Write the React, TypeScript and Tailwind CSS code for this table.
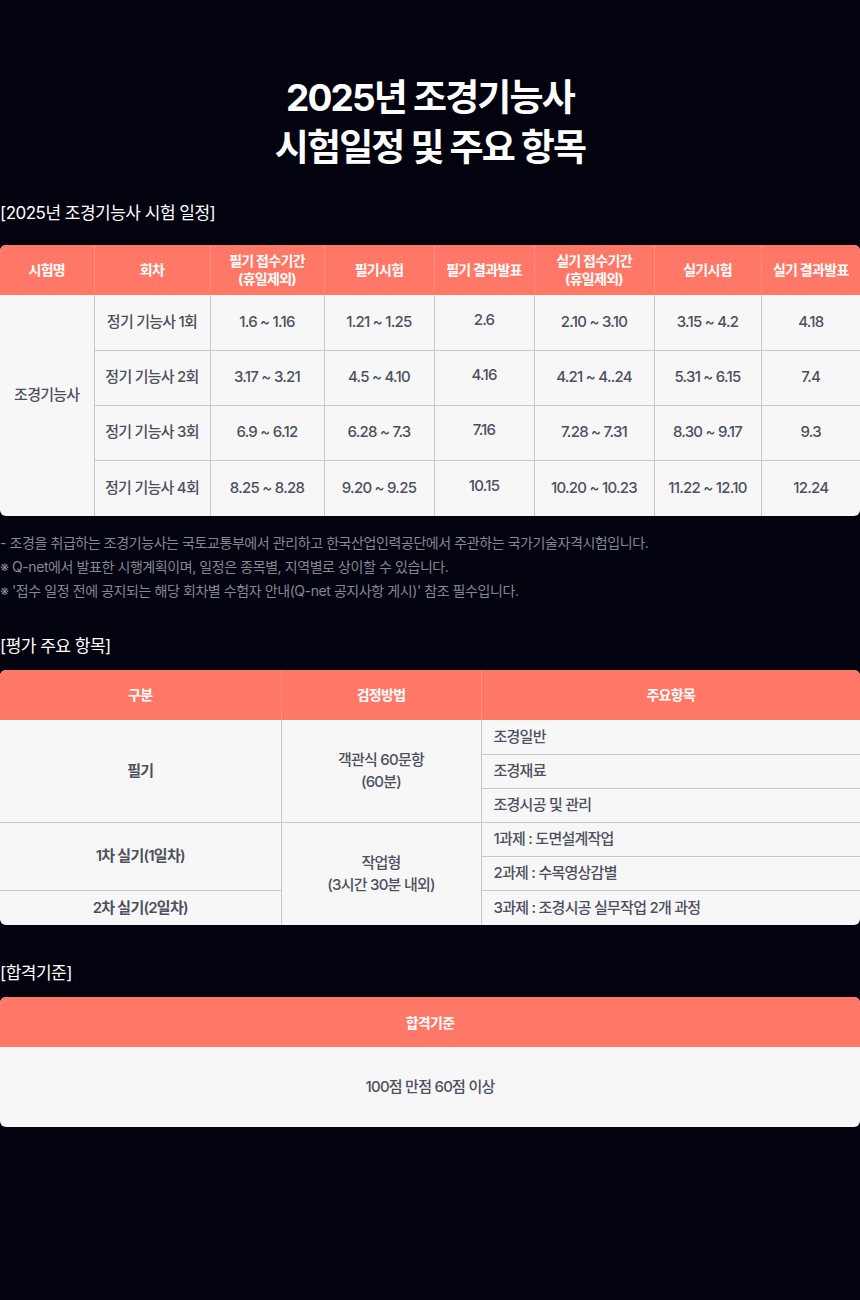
const font = { fontFamily: '"Inter", "Noto Sans CJK KR", sans-serif' };

const schedule = [
  ["정기 기능사 1회", "1.6 ~ 1.16", "1.21 ~ 1.25", "2.6", "2.10 ~ 3.10", "3.15 ~ 4.2", "4.18"],
  ["정기 기능사 2회", "3.17 ~ 3.21", "4.5 ~ 4.10", "4.16", "4.21 ~ 4..24", "5.31 ~ 6.15", "7.4"],
  ["정기 기능사 3회", "6.9 ~ 6.12", "6.28 ~ 7.3", "7.16", "7.28 ~ 7.31", "8.30 ~ 9.17", "9.3"],
  ["정기 기능사 4회", "8.25 ~ 8.28", "9.20 ~ 9.25", "10.15", "10.20 ~ 10.23", "11.22 ~ 12.10", "12.24"],
];

const notes = [
  "- 조경을 취급하는 조경기능사는 국토교통부에서 관리하고 한국산업인력공단에서 주관하는 국가기술자격시험입니다.",
  "※ Q-net에서 발표한 시행계획이며, 일정은 종목별, 지역별로 상이할 수 있습니다.",
  "※ '접수 일정 전에 공지되는 해당 회차별 수험자 안내(Q-net 공지사항 게시)' 참조 필수입니다.",
];

function SectionLabel({ children }: { children: React.ReactNode }) {
  return <h3 className="text-[17px] leading-[24px] text-white tracking-[-0.03em]">{children}</h3>;
}

const th = "bg-[#ff7867] text-white text-[14px] font-bold leading-[18px] tracking-[-0.05em] border-r border-[#ff8e80] last:border-r-0";
const td = "border border-[#c9c9c9] text-[15px] font-medium text-[#4d505d] tracking-[-0.05em] text-center";

export default function App() {
  return (
    <div className="min-h-[1300px] bg-[#03030f]" style={font}>
      <div className="pt-[73px] pb-[40px]">
        <h1 className="text-center text-white text-[37px] font-bold leading-[50px] tracking-[-0.05em]">
          2025년 조경기능사
          <br />
          시험일정 및 주요 항목
        </h1>

        <div className="mt-[28px]">
          <SectionLabel>[2025년 조경기능사 시험 일정]</SectionLabel>
          <div className="mt-[20px] rounded-md overflow-hidden bg-[#f7f7f7]">
            <table className="w-full border-collapse table-fixed">
              <colgroup>
                {[94, 116, 114, 110, 100, 120, 107, 99].map((w, i) => (
                  <col key={i} style={{ width: w }} />
                ))}
              </colgroup>
              <thead>
                <tr className="h-[50px]">
                  <th className={th}>시험명</th>
                  <th className={th}>회차</th>
                  <th className={th}>필기 접수기간<br />(휴일제외)</th>
                  <th className={th}>필기시험</th>
                  <th className={th}>필기 결과발표</th>
                  <th className={th}>실기 접수기간<br />(휴일제외)</th>
                  <th className={th}>실기시험</th>
                  <th className={th}>실기 결과발표</th>
                </tr>
              </thead>
              <tbody>
                {schedule.map((row, r) => (
                  <tr key={r} className={r === 3 ? "h-[56px]" : "h-[55px]"}>
                    {r === 0 && (
                      <td rowSpan={4} className={`${td} border-l-0 border-b-0 border-t-0 pb-[20px]`}>
                        조경기능사
                      </td>
                    )}
                    {row.map((c, i) => (
                      <td
                        key={i}
                        className={`${td} ${r === 0 ? "border-t-0" : ""} ${r === 3 ? "border-b-0" : ""} ${i === 6 ? "border-r-0" : ""} ${i === 3 ? "pb-[4px]" : ""}`}
                      >
                        {c}
                      </td>
                    ))}
                  </tr>
                ))}
              </tbody>
            </table>
          </div>

          <ul className="mt-[15px]">
            {notes.map((n, i) => (
              <li key={i} className="text-[14px] leading-[24px] text-[#868792] tracking-[-0.03em]">
                {n}
              </li>
            ))}
          </ul>
        </div>

        <div className="mt-[31px]">
          <SectionLabel>[평가 주요 항목]</SectionLabel>
          <div className="mt-[12px] rounded-md overflow-hidden bg-[#f7f7f7]">
            <table className="w-full border-collapse table-fixed">
              <colgroup>
                <col style={{ width: 281 }} />
                <col style={{ width: 200 }} />
                <col style={{ width: 379 }} />
              </colgroup>
              <thead>
                <tr className="h-[50px]">
                  <th className={th}>구분</th>
                  <th className={th}>검정방법</th>
                  <th className={th}>주요항목</th>
                </tr>
              </thead>
              <tbody className="text-[15px] font-medium text-[#4d505d] tracking-[-0.05em]">
                <tr className="h-[34px]">
                  <td rowSpan={3} className="border-r border-b border-[#c9c9c9] text-center font-semibold">필기</td>
                  <td rowSpan={3} className="border-r border-b border-[#c9c9c9] text-center leading-[22px]">
                    객관식 60문항
                    <br />
                    (60분)
                  </td>
                  <td className="border-b border-[#c9c9c9] px-[12px]">조경일반</td>
                </tr>
                <tr className="h-[34px]">
                  <td className="border-b border-[#c9c9c9] px-[12px]">조경재료</td>
                </tr>
                <tr className="h-[34px]">
                  <td className="border-b border-[#c9c9c9] px-[12px]">조경시공 및 관리</td>
                </tr>
                <tr className="h-[34px]">
                  <td rowSpan={2} className="border-r border-b border-[#c9c9c9] text-center font-semibold">1차 실기(1일차)</td>
                  <td rowSpan={3} className="border-r border-[#c9c9c9] text-center leading-[22px]">
                    작업형
                    <br />
                    (3시간 30분 내외)
                  </td>
                  <td className="border-b border-[#c9c9c9] px-[12px]">1과제 : 도면설계작업</td>
                </tr>
                <tr className="h-[34px]">
                  <td className="border-b border-[#c9c9c9] px-[12px]">2과제 : 수목영상감별</td>
                </tr>
                <tr className="h-[35px]">
                  <td className="border-r border-[#c9c9c9] text-center font-semibold">2차 실기(2일차)</td>
                  <td className="px-[12px]">3과제 : 조경시공 실무작업 2개 과정</td>
                </tr>
              </tbody>
            </table>
          </div>
        </div>

        <div className="mt-[36px]">
          <SectionLabel>[합격기준]</SectionLabel>
          <div className="mt-[12px] rounded-md overflow-hidden bg-[#f7f7f7]">
            <div className="h-[50px] bg-[#ff7867] flex items-center justify-center text-white text-[14px] font-bold tracking-[-0.05em]">
              합격기준
            </div>
            <div className="h-[80px] flex items-center justify-center text-[15px] font-medium text-[#4d505d] tracking-[-0.05em]">
              100점 만점 60점 이상
            </div>
          </div>
        </div>
      </div>
    </div>
  );
}
